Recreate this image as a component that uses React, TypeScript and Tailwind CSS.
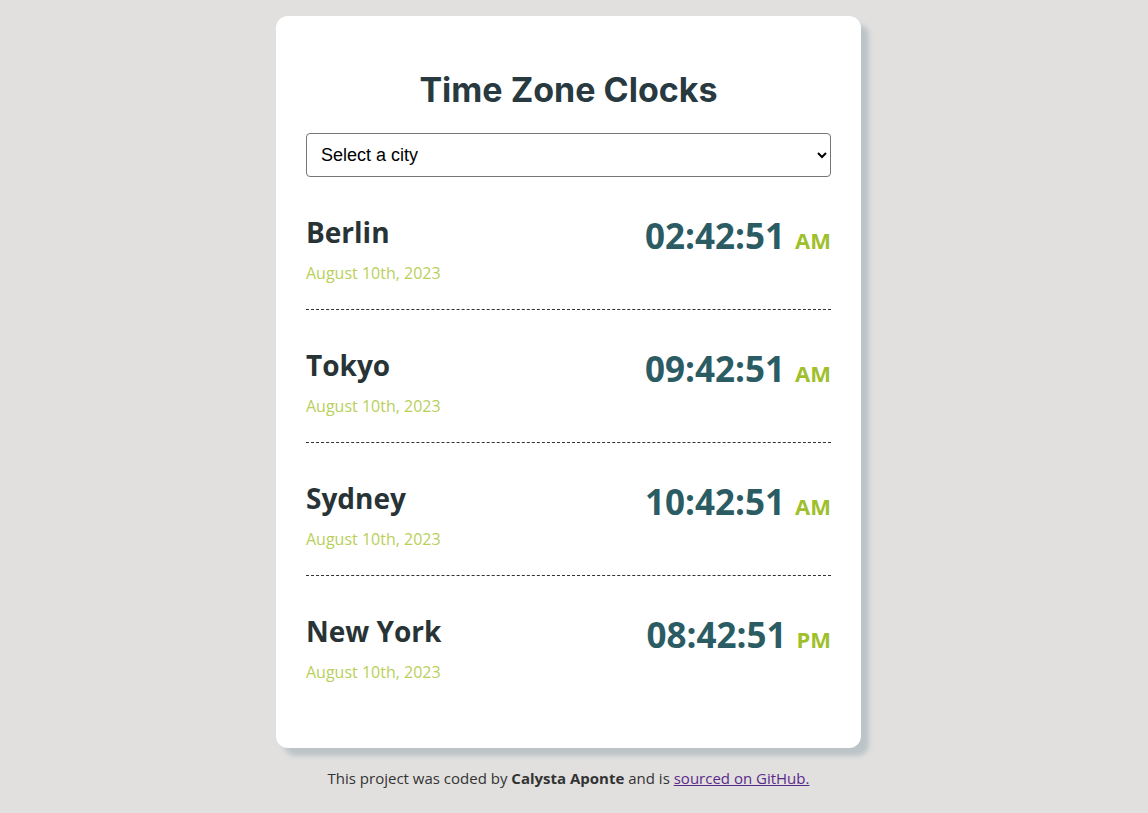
const cities = [
  { name: 'Berlin', time: '02:42:51', ampm: 'AM' },
  { name: 'Tokyo', time: '09:42:51', ampm: 'AM' },
  { name: 'Sydney', time: '10:42:51', ampm: 'AM' },
  { name: 'New York', time: '08:42:51', ampm: 'PM' },
]

const App = () => {
  return (
    <div className="min-h-screen w-full bg-[#e1e0df] pr-[11px] pt-4 font-['Open_Sans',sans-serif]">
      <div className="mx-auto w-[585px]">
        <div className="rounded-xl bg-white px-[30px] pt-[54px] pb-[40px] shadow-[8px_8px_5px_#bcc4c8]">
          <h1 className="mb-6 text-center font-['Inter',sans-serif] text-[34px] leading-[1.15] font-bold text-[#283a40]">
            Time Zone Clocks
          </h1>
          <select className="block h-[44px] w-full rounded border border-[#767676] bg-white pl-[10px] pr-2 font-['Liberation_Sans',sans-serif] text-lg text-black">
            <option>Select a city</option>
          </select>
          {cities.map((c, i) => (
            <div
              key={c.name}
              className={
                i < cities.length - 1
                  ? 'flex items-start justify-between border-b border-dashed border-[#333] pt-[38px] pb-[24px]'
                  : 'flex items-start justify-between pt-[38px] pb-[24px]'
              }
            >
              <div>
                <div className="text-[28px] leading-[34px] font-bold text-[#283336]">{c.name}</div>
                <div className="mt-3 text-base leading-6 text-[#b8d05a]">August 10th, 2023</div>
              </div>
              <div className="flex items-baseline">
                <span className="text-[35px] leading-[42px] font-bold text-[#2b5c63]">{c.time}</span>
                <span className="ml-[10px] text-[22px] font-bold text-[#a0bf2d]">{c.ampm}</span>
              </div>
            </div>
          ))}
        </div>
        <p className="mt-[19px] text-center text-[15px] text-[#333]">
          This project was coded by <strong>Calysta Aponte</strong> and is{' '}
          <a href="#" className="text-[#5a2a8a] underline">
            sourced on GitHub.
          </a>
        </p>
      </div>
    </div>
  )
}

export default App
